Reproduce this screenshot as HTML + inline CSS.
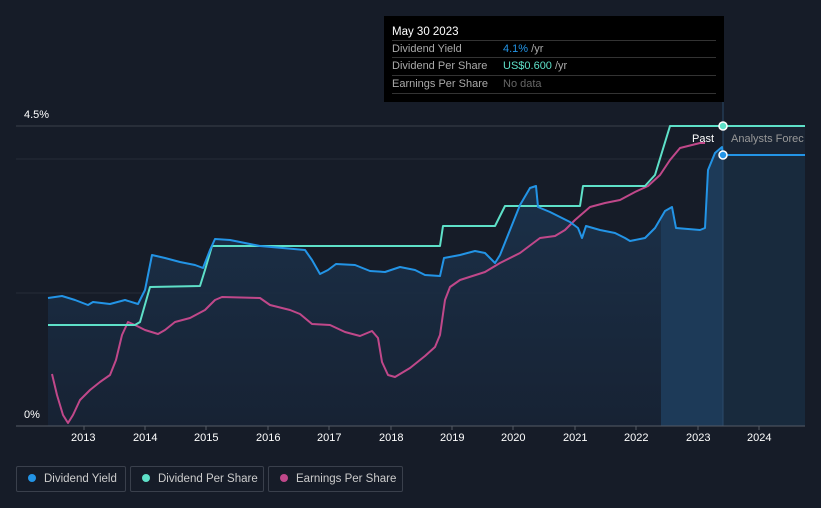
<!DOCTYPE html><html><head><style>
html,body{margin:0;width:821px;height:508px;overflow:hidden}
body{background:#161c28;font-family:"Liberation Sans",sans-serif;position:relative}
.tt{position:absolute;left:384px;top:16px;width:340px;height:86px;background:#000;color:#fff;font-size:11px}
.tt .h{position:absolute;left:8px;top:10px;font-size:11.5px}
.row{position:absolute;left:8px;width:324px;border-top:1px solid #333;height:17px;line-height:17px;color:#aaa}
.row span{position:absolute;left:111px}
.lg{position:absolute;top:466px;height:26px;border:1px solid #3a404c;border-radius:2px;color:#ccc;font-size:11.5px;line-height:24px;box-sizing:border-box;white-space:nowrap;overflow:hidden}
.lg i{display:inline-block;width:8px;height:8px;border-radius:50%;margin:0 8px 0 11px}
.yr{position:absolute;top:432px;color:#fff;font-size:11px}
</style></head><body>
<svg width="821" height="508" style="position:absolute;left:0;top:0">
<defs><linearGradient id="g" x1="0" x2="0" y1="0" y2="1"><stop offset="0" stop-color="#1c3550"/><stop offset="1" stop-color="#172335"/></linearGradient></defs>
<rect x="723" y="126" width="82" height="300" fill="#1a2433"/>
<line x1="16" y1="126" x2="805" y2="126" stroke="#3a404a"/>
<line x1="16" y1="159" x2="805" y2="159" stroke="#262d38"/>
<line x1="16" y1="293" x2="805" y2="293" stroke="#262d38"/>
<path d="M48,298 L62,296 75,300 88,305 93,302 110,304 125,300 138,304 145,290 152,255 165,258 180,262 195,265 203,268 210,250 215,239 230,240 245,243 260,246 305,250 312,260 320,274 328,270 336,264 355,265 370,271 385,272 400,267 415,270 425,275 440,276 444,258 460,255 475,251 485,253 495,263 500,255 510,230 520,205 530,188 536,186 538,207 550,212 570,222 578,228 582,238 586,226 600,230 615,233 625,238 630,241 645,238 655,228 665,211 672,207 676,228 700,230 705,228 708,170 715,153 723,147 723,426 48,426Z" fill="url(#g)" opacity="0.9"/>
<path d="M661,426 L661,220 665,211 672,207 676,228 700,230 705,228 708,170 715,153 723,147 723,426Z" fill="#1d3a58"/>
<rect x="723" y="155" width="82" height="271" fill="#182a3d"/>
<line x1="723" y1="100" x2="723" y2="426" stroke="#2b4a6a"/>
<line x1="16" y1="426" x2="805" y2="426" stroke="#555b66"/>
<path d="M52,374 L57,395 63,415 68,423 73,415 80,400 90,390 100,382 110,375 116,360 122,335 128,322 135,325 145,330 158,334 165,330 175,322 190,318 205,310 215,300 222,297 260,298 270,305 290,310 300,314 312,324 330,325 345,332 360,336 372,331 378,338 382,362 388,375 395,377 410,368 425,356 435,347 440,335 445,300 450,287 460,280 485,272 500,263 520,253 540,238 555,236 565,230 575,220 590,207 605,203 620,200 635,192 648,186 660,175 670,160 680,148 700,143 705,143" fill="none" stroke="#c0488a" stroke-width="2" stroke-linejoin="round"/>
<path d="M48,325 L135,325 140,322 150,287 200,286 205,270 212,246 440,246 443,226 495,226 505,206 580,206 583,186 645,186 655,175 670,126 805,126" fill="none" stroke="#5ee0c8" stroke-width="2" stroke-linejoin="round"/>
<path d="M48,298 L62,296 75,300 88,305 93,302 110,304 125,300 138,304 145,290 152,255 165,258 180,262 195,265 203,268 210,250 215,239 230,240 245,243 260,246 305,250 312,260 320,274 328,270 336,264 355,265 370,271 385,272 400,267 415,270 425,275 440,276 444,258 460,255 475,251 485,253 495,263 500,255 510,230 520,205 530,188 536,186 538,207 550,212 570,222 578,228 582,238 586,226 600,230 615,233 625,238 630,241 645,238 655,228 665,211 672,207 676,228 700,230 705,228 708,170 715,153 722,147 723,155 805,155" fill="none" stroke="#2394e6" stroke-width="2" stroke-linejoin="round"/>
<circle cx="723" cy="126" r="4" fill="#5ee0c8" stroke="#fff" stroke-width="1.5"/>
<circle cx="723" cy="155" r="4" fill="#2394e6" stroke="#fff" stroke-width="1.5"/>
<g stroke="#555b66"><line x1="84" y1="426" x2="84" y2="430"/><line x1="145" y1="426" x2="145" y2="430"/><line x1="206" y1="426" x2="206" y2="430"/><line x1="268" y1="426" x2="268" y2="430"/><line x1="329" y1="426" x2="329" y2="430"/><line x1="391" y1="426" x2="391" y2="430"/><line x1="452" y1="426" x2="452" y2="430"/><line x1="513" y1="426" x2="513" y2="430"/><line x1="575" y1="426" x2="575" y2="430"/><line x1="636" y1="426" x2="636" y2="430"/><line x1="698" y1="426" x2="698" y2="430"/><line x1="759" y1="426" x2="759" y2="430"/></g>
<text x="24" y="118" fill="#fff" font-size="11" font-family="Liberation Sans">4.5%</text>
<text x="24" y="418" fill="#fff" font-size="11" font-family="Liberation Sans">0%</text>
<text x="692" y="142" fill="#fff" font-size="11" font-family="Liberation Sans">Past</text>
<text x="731" y="142" fill="#999" font-size="11" font-family="Liberation Sans">Analysts Forec</text>
</svg>
<div class="yr" style="left:71px">2013</div><div class="yr" style="left:133px">2014</div><div class="yr" style="left:194px">2015</div><div class="yr" style="left:256px">2016</div><div class="yr" style="left:317px">2017</div><div class="yr" style="left:379px">2018</div><div class="yr" style="left:440px">2019</div><div class="yr" style="left:501px">2020</div><div class="yr" style="left:563px">2021</div><div class="yr" style="left:624px">2022</div><div class="yr" style="left:686px">2023</div><div class="yr" style="left:747px">2024</div>
<div class="tt"><div class="h">May 30 2023</div>
<div class="row" style="top:24px">Dividend Yield<span><b style="font-weight:normal;color:#2394e6">4.1%</b> /yr</span></div>
<div class="row" style="top:41px">Dividend Per Share<span><b style="font-weight:normal;color:#5ee0c8">US$0.600</b> /yr</span></div>
<div class="row" style="top:59px;border-bottom:1px solid #333">Earnings Per Share<span style="color:#666">No data</span></div></div>
<div class="lg" style="left:16px;width:110px"><i style="background:#2394e6"></i>Dividend Yield</div>
<div class="lg" style="left:130px;width:134px"><i style="background:#5ee0c8"></i>Dividend Per Share</div>
<div class="lg" style="left:268px;width:135px"><i style="background:#c0488a"></i>Earnings Per Share</div>
</body></html>
